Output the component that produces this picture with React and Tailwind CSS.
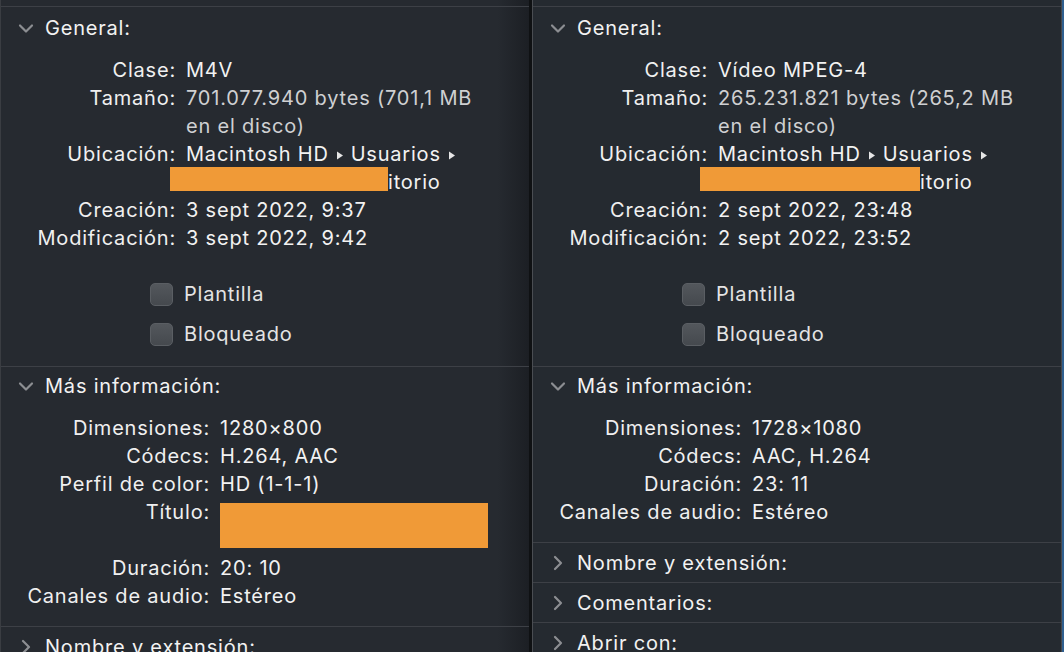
import React from 'react';

const font = { fontFamily: 'Inter, "Noto Sans", sans-serif' };

function ChevronDown() {
  return (
    <svg width="16" height="11" viewBox="0 0 16 11" className="shrink-0">
      <path d="M2 2.5 L8 8.5 L14 2.5" fill="none" stroke="#8c8e92" strokeWidth="2.2" strokeLinecap="round" strokeLinejoin="round" />
    </svg>
  );
}

function ChevronRight() {
  return (
    <svg width="11" height="16" viewBox="0 0 11 16" className="shrink-0">
      <path d="M3 2 L9 8 L3 14" fill="none" stroke="#8c8e92" strokeWidth="2.2" strokeLinecap="round" strokeLinejoin="round" />
    </svg>
  );
}

function Arrow() {
  return (
    <svg width="8" height="9" viewBox="0 0 8 9" className="inline-block mx-[7px] align-[1px]">
      <path d="M1 0.5 L7 4.5 L1 8.5 Z" fill="#e6e6e6" />
    </svg>
  );
}

function SectionHeader({ title, open, height = 'h-[42px]' }) {
  return (
    <div className={`flex items-center ${height}`}>
      <div className="w-[44px] flex justify-center pl-[5px]">
        {open ? <ChevronDown /> : <ChevronRight />}
      </div>
      <span className="text-[20px] tracking-[0.8px] text-[#f2f2f2]">{title}</span>
    </div>
  );
}

function Row({ label, labelW, children, valueClass = 'text-[#f2f2f2]' }) {
  return (
    <div className="flex leading-[28px] text-[20px] tracking-[0.8px]">
      <div className={`${labelW} shrink-0 text-right text-[#f0f0f0] whitespace-nowrap`}>{label}</div>
      <div className={`pl-[10px] whitespace-nowrap ${valueClass}`}>{children}</div>
    </div>
  );
}

function Check({ label }) {
  return (
    <div className="flex items-center h-[40px] pl-[149px]">
      <div className="w-[23px] h-[23px] rounded-[5px] bg-[linear-gradient(to_bottom,#53575c,#45494e)] border border-[#5a5e63]" />
      <span className="ml-[11px] text-[20px] tracking-[0.8px] text-[#e4e4e4]">{label}</span>
    </div>
  );
}

function Redacted({ offset, width }) {
  return (
    <span
      className="inline-block align-top h-[24px] mt-[-1px] bg-[#f09a37]"
      style={{ marginLeft: offset, width }}
    />
  );
}

function General({ clase, bytes, mb, created, modified, redOffset, redWidth }) {
  const w = 'w-[175px]';
  return (
    <div className="border-t border-[#3d4046]">
      <SectionHeader title="General:" open />
      <div className="pt-[7px]">
        <Row label="Clase:" labelW={w}>{clase}</Row>
        <Row label="Tamaño:" labelW={w} valueClass="text-[#cfd0d2]">
          {bytes} bytes ({mb} MB
          <br />
          en el disco)
        </Row>
        <Row label="Ubicación:" labelW={w}>
          Macintosh HD<Arrow />Usuarios<Arrow />
          <br />
          <Redacted offset={redOffset} width={redWidth} />
          itorio
        </Row>
        <Row label="Creación:" labelW={w}>{created}</Row>
        <Row label="Modificación:" labelW={w}>{modified}</Row>
      </div>
      <div className="pt-[22px] pb-[12px]">
        <Check label="Plantilla" />
        <Check label="Bloqueado" />
      </div>
    </div>
  );
}

function Collapsed({ title }) {
  return (
    <div className="border-t border-[#3d4046]">
      <SectionHeader title={title} height="h-[39px]" />
    </div>
  );
}

function LeftPanel() {
  const w = 'w-[209px]';
  return (
    <div className="w-[529px] shrink-0 border-l border-[#3a3d42] bg-[linear-gradient(to_right,#262a30_94%,#1c1f24)]">
      <div className="h-[6px]" />
      <General
        clase="M4V"
        bytes="701.077.940"
        mb="701,1"
        created="3 sept 2022, 9:37"
        modified="3 sept 2022, 9:42"
        redOffset={-16}
        redWidth={218}
      />
      <div className="border-t border-[#3d4046]">
        <SectionHeader title="Más información:" open height="h-[38px]" />
        <div className="pt-[9px] pb-[16px]">
          <Row label="Dimensiones:" labelW={w}>1280×800</Row>
          <Row label="Códecs:" labelW={w}>H.264, AAC</Row>
          <Row label="Perfil de color:" labelW={w}>HD (1-1-1)</Row>
          <div className="flex text-[20px] tracking-[0.8px] h-[56px]">
            <div className={`${w} shrink-0 text-right text-[#f0f0f0] leading-[28px]`}>Título:</div>
            <div className="pl-[10px] pt-[5px]">
              <div className="w-[268px] h-[45px] bg-[#f09a37]" />
            </div>
          </div>
          <Row label="Duración:" labelW={w}>20: 10</Row>
          <Row label="Canales de audio:" labelW={w}>Estéreo</Row>
        </div>
      </div>
      <Collapsed title="Nombre y extensión:" />
    </div>
  );
}

function RightPanel() {
  const w = 'w-[209px]';
  return (
    <div className="flex-1 border-l border-[#4a4d52] border-r border-r-[#45484d] bg-[#252a30]">
      <div className="h-[6px]" />
      <General
        clase="Vídeo MPEG-4"
        bytes="265.231.821"
        mb="265,2"
        created="2 sept 2022, 23:48"
        modified="2 sept 2022, 23:52"
        redOffset={-18}
        redWidth={220}
      />
      <div className="border-t border-[#3d4046]">
        <SectionHeader title="Más información:" open height="h-[38px]" />
        <div className="pt-[9px] pb-[16px]">
          <Row label="Dimensiones:" labelW={w}>1728×1080</Row>
          <Row label="Códecs:" labelW={w}>AAC, H.264</Row>
          <Row label="Duración:" labelW={w}>23: 11</Row>
          <Row label="Canales de audio:" labelW={w}>Estéreo</Row>
        </div>
      </div>
      <Collapsed title="Nombre y extensión:" />
      <Collapsed title="Comentarios:" />
      <Collapsed title="Abrir con:" />
    </div>
  );
}

export default function App() {
  return (
    <div style={font} className="w-[1064px] h-[652px] overflow-hidden flex bg-[#23272d] antialiased">
      <LeftPanel />
      <div className="w-[3px] shrink-0 bg-[#0f1113]" />
      <RightPanel />
      <div className="w-[2px] shrink-0 bg-[#2f5f8f]" />
    </div>
  );
}
